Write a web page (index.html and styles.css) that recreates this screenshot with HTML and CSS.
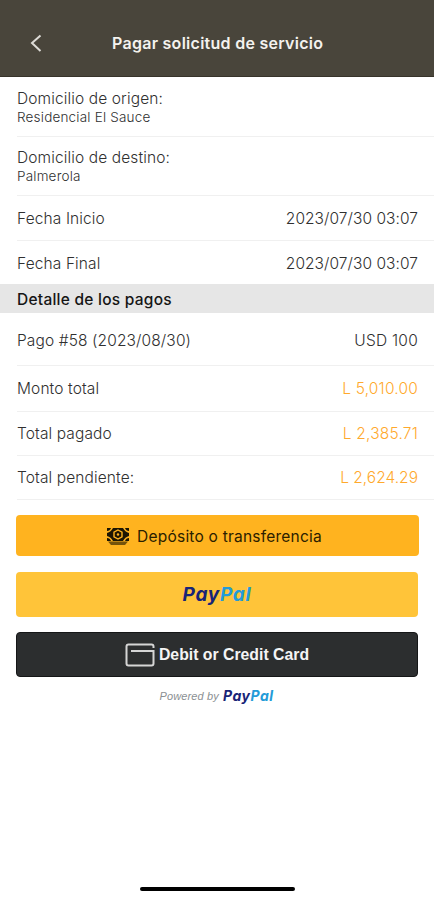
FILE: index.html
```html
<!DOCTYPE html>
<html lang="es">
<head>
<meta charset="utf-8">
<title>Pagar solicitud de servicio</title>
<link rel="stylesheet" href="styles.css">
</head>
<body>
<header class="topbar">
  <svg class="back" viewBox="0 0 12 18"><path d="M10.500 1.500 2 9l8.500 8"/></svg>
  <h1>Pagar solicitud de servicio</h1>
</header>
<main>
  <section class="list">
    <div class="row address"><span>Domicilio de origen:</span><small>Residencial El Sauce</small></div>
    <div class="row address second"><span>Domicilio de destino:</span><small>Palmerola</small></div>
    <div class="row start"><span>Fecha Inicio</span><span class="date">2023/07/30 03:07</span></div>
    <div class="row end"><span>Fecha Final</span><span class="date">2023/07/30 03:07</span></div>
  </section>
  <h2>Detalle de los pagos</h2>
  <section class="list">
    <div class="row payment"><span>Pago #58 (2023/08/30)</span><span class="usd">USD 100</span></div>
    <div class="row total"><span>Monto total</span><span class="amount">L 5,010.00</span></div>
    <div class="row paid"><span>Total pagado</span><span class="amount">L 2,385.71</span></div>
    <div class="row paid"><span>Total pendiente:</span><span class="amount pending">L 2,624.29</span></div>
  </section>
  <section class="actions">
    <button class="deposit">
      <svg class="money" viewBox="0 0 22 18">
        <path d="M0 0h22v13H0z" fill="#1d1603"/>
        <path d="M0 3q3 0 4-3h2Q4 4 0 5zM22 3q-3 0-4-3h-2q2 4 6 5zM0 10q3 0 4 3h2Q4 9 0 8zM22 10q-3 0-4 3h-2q2-4 6-5z" fill="#ffb31f"/>
        <path d="m11 2 4 2.200v4.600L11 11 7 8.800V4.200z" fill="none" stroke="#ffb31f" stroke-width="1.400"/>
        <circle cx="11" cy="6.500" r="1.200" fill="#ffb31f"/>
        <path d="M1 13.500 4 17h14l3-3.500z" fill="#76530b"/>
      </svg>
      <span>Depósito o transferencia</span>
    </button>
    <button class="paypal"><span class="brand">Pay<b>Pal</b></span></button>
    <button class="card">
      <svg class="card-icon" viewBox="0 0 30 24"><path d="M28.500 5V3.500q0-2-2-2h-23q-2 0-2 2v17q0 2 2 2h23q2 0 2-2V8H6"/></svg>
      <span>Debit or Credit Card</span>
    </button>
    <div class="powered"><span>Powered by</span><span class="brand small">Pay<b>Pal</b></span></div>
  </section>
</main>
<footer><i class="home"></i></footer>
</body>
</html>
```
FILE: styles.css
```css
* { box-sizing: border-box; }
body { margin: 0; height: 900px; display: flex; flex-direction: column; background: #fff; color: #303030; font: 300 15.5px/20px Inter, sans-serif; letter-spacing: .12px; overflow: hidden; }
span, small { white-space: nowrap; }
.topbar { height: 77px; flex: none; display: flex; background: #49453b; border-bottom: 1px solid #37332a; padding: 34px 0 0 30px; color: #f4f2ee; }
.back { width: 12px; height: 18px; fill: none; stroke: #dedcd7; stroke-width: 2; }
h1 { margin: 0 0 0 70px; font-size: 16px; line-height: 19px; font-weight: 600; letter-spacing: .27px; }
main { flex: 1; }
.list { padding-left: 17px; }
.row { display: flex; justify-content: space-between; align-items: center; padding-right: 16px; border-bottom: 1px solid #f0f0f0; }
.address { flex-direction: column; align-items: flex-start; justify-content: flex-start; height: 60px; padding-top: 12px; line-height: 19px; }
.second { height: 59px; padding-top: 11px; }
small { font-size: 13.5px; line-height: 18px; letter-spacing: .2px; }
.start { height: 45px; padding-top: 2px; }
.end { height: 43px; padding-top: 2px; border: 0; }
.date { letter-spacing: .05px; }
h2 { margin: 0; height: 29px; padding-left: 17px; background: #e6e6e6; font-size: 15.5px; line-height: 31px; font-weight: 500; letter-spacing: .25px; color: #151515; }
.payment { height: 53px; padding-top: 3px; }
.usd { letter-spacing: .25px; }
.total { height: 46px; }
.paid { height: 44px; }
.amount { color: #ffa92c; letter-spacing: .2px; }
.pending { letter-spacing: .02px; }
.actions { padding: 15px 15px 0 16px; }
button { display: flex; width: 100%; align-items: center; justify-content: center; border: 0; padding: 0; border-radius: 4px; }
.deposit { height: 41px; background: #ffb31f; color: #2b2000; font: 400 15.5px/20px Inter, sans-serif; letter-spacing: .22px; gap: 8px; padding: 2px 6px 0 0; }
.money { width: 22px; height: 18px; }
.paypal { height: 45px; margin-top: 16px; background: #ffc439; width: 402px; }
.brand { font: italic 700 19px/22px Inter, sans-serif; font-feature-settings: "cv11"; letter-spacing: .7px; color: #182477; }
.brand b { font-weight: inherit; color: #239bd8; }
.paypal .brand { margin-top: 0; }
.card { height: 45px; margin-top: 15px; width: 402px; background: #2c2e2f; border: 1px solid #151617; color: #f5f5f5; font: 700 15.8px/20px "Liberation Sans", sans-serif; gap: 4px; }
.card-icon { width: 30px; height: 24px; fill: none; stroke: #d5d5d5; stroke-width: 2; }
.powered { display: flex; justify-content: center; align-items: center; height: 20px; margin: 9px 2px 0 0; gap: 4px; font: italic 400 11px/16px "Liberation Sans", sans-serif; letter-spacing: .15px; color: #8b9093; }
.brand.small { font-size: 14px; line-height: 18px; letter-spacing: .5px; }
footer { height: 16px; flex: none; display: flex; justify-content: center; padding-top: 3px; }
.home { width: 155px; height: 4px; border-radius: 2px; background: #000; }
```
